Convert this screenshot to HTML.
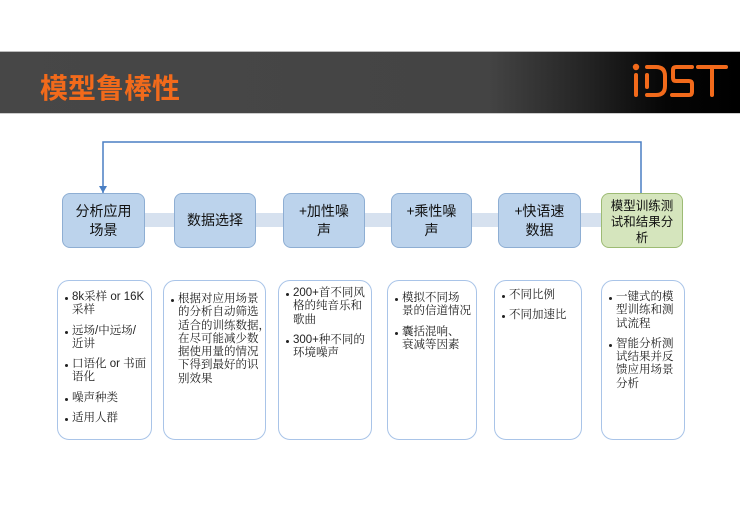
<!DOCTYPE html>
<html><head><meta charset="utf-8"><style>
body{margin:0;width:740px;height:521px;background:#fff;position:relative;overflow:hidden;font-family:"Liberation Sans","Noto Sans CJK SC",sans-serif}
.hdr{position:absolute;left:0;top:51px;width:740px;height:61px;background:linear-gradient(to right,#474747 0%,#444 66%,#222 80%,#050505 90%,#000 100%);border-top:1px solid #bbb;border-bottom:1px solid #ccc}
.title{position:absolute;left:40px;top:67px;font-size:28px;font-weight:bold;color:#f26a1b;font-family:"Noto Sans CJK SC",sans-serif}
.b{position:absolute;top:193px;height:55px;background:#bcd3ec;border:1px solid #8eaed3;border-radius:8px;box-sizing:border-box;display:flex;align-items:center;justify-content:center;text-align:center;font-size:14px;line-height:19px;color:#111;font-family:"Noto Sans CJK SC",sans-serif}
.c{position:absolute;top:213px;height:14px;background:#d6e1ef}
.p{position:absolute;top:280px;height:160px;border:1px solid #a9c4e8;border-radius:12px;box-sizing:border-box;font-family:"Liberation Sans","Noto Serif CJK SC",serif;font-size:11.5px;line-height:13.3px;color:#222;padding:10px 0 0 4px;white-space:nowrap}
.p ul{margin:0;padding:0 0 0 10px;list-style:none}
.p li{position:relative;margin-bottom:7px}
.p li:before{content:"";position:absolute;left:-7px;top:6px;width:3px;height:3px;background:#222;border-radius:50%}
</style></head><body>
<div class="hdr"></div>
<div class="title">模型鲁棒性</div>
<svg style="position:absolute;left:630px;top:62px" width="100" height="40" viewBox="0 0 100 40">
<g stroke="#f26a1b" stroke-width="4" fill="none" stroke-linecap="round">
<circle cx="6" cy="5" r="1.2" fill="#f26a1b"/>
<line x1="6" y1="13" x2="6" y2="33"/>
<path d="M17 5 H26 Q35 5 35 14 V24 Q35 33 26 33 H17"/>
<line x1="17" y1="13" x2="17" y2="25"/>
<path d="M62 5 H46 Q43 5 43 8 V16 Q43 19 46 19 H59 Q62 19 62 22 V30 Q62 33 59 33 H42"/>
<path d="M68 5 H96 M82 5 V33"/>
</g></svg>
<svg style="position:absolute;left:0;top:0" width="740" height="200">
<path d="M103 193 V142 H641 V193" stroke="#4a7fc4" stroke-width="1.5" fill="none"/>
<path d="M99 186 L103 193 L107 186 Z" fill="#4a7fc4"/>
</svg>
<div class="c" style="left:145px;width:29px"></div>
<div class="c" style="left:256px;width:27px"></div>
<div class="c" style="left:365px;width:26px"></div>
<div class="c" style="left:472px;width:26px"></div>
<div class="c" style="left:581px;width:20px"></div>
<div class="b" style="left:62px;width:83px">分析应用<br>场景</div>
<div class="b" style="left:174px;width:82px">数据选择</div>
<div class="b" style="left:283px;width:82px">+加性噪<br>声</div>
<div class="b" style="left:391px;width:81px">+乘性噪<br>声</div>
<div class="b" style="left:498px;width:83px">+快语速<br>数据</div>
<div class="b" style="left:601px;width:82px;background:#d5e5bd;border-color:#9dbb74;font-size:12.5px;line-height:16px">模型训练测<br>试和结果分<br>析</div>
<div class="p" style="left:57px;width:95px"><ul><li>8k采样 or 16K<br>采样</li><li>远场/中远场/<br>近讲</li><li>口语化 or 书面<br>语化</li><li>噪声种类</li><li>适用人群</li></ul></div>
<div class="p" style="left:163px;width:103px;padding-top:12px"><ul><li>根据对应用场景<br>的分析自动筛选<br>适合的训练数据，<br>在尽可能减少数<br>据使用量的情况<br>下得到最好的识<br>别效果</li></ul></div>
<div class="p" style="left:278px;width:94px;padding-top:6px"><ul><li>200+首不同风<br>格的纯音乐和<br>歌曲</li><li>300+种不同的<br>环境噪声</li></ul></div>
<div class="p" style="left:387px;width:90px;padding-top:11px"><ul><li>模拟不同场<br>景的信道情况</li><li>囊括混响、<br>衰减等因素</li></ul></div>
<div class="p" style="left:494px;width:88px;padding-top:8px"><ul><li>不同比例</li><li>不同加速比</li></ul></div>
<div class="p" style="left:601px;width:84px;padding-top:10px"><ul><li>一键式的模<br>型训练和测<br>试流程</li><li>智能分析测<br>试结果并反<br>馈应用场景<br>分析</li></ul></div>
</body></html>
